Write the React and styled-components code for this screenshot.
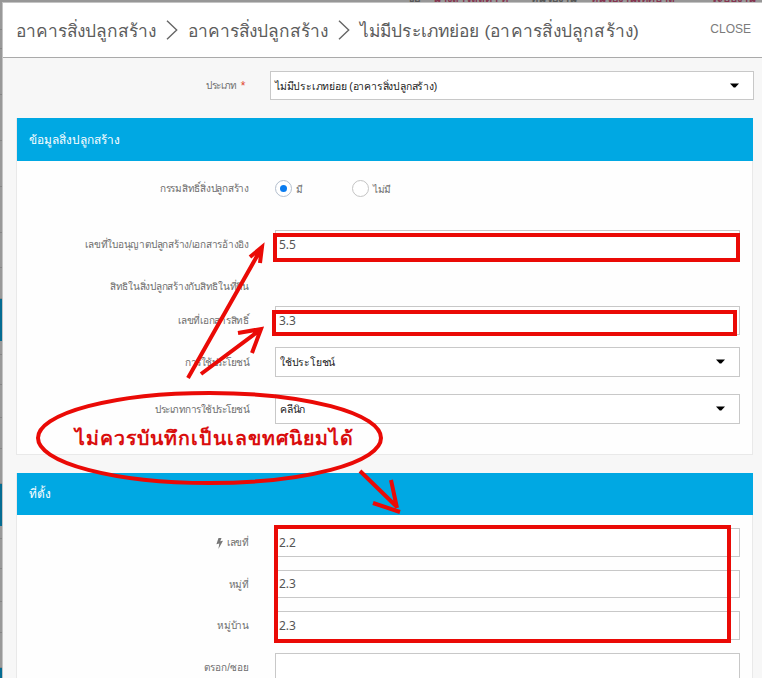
import React from 'react';
import styled, { createGlobalStyle } from 'styled-components';

const Global = createGlobalStyle`
  * { box-sizing: border-box; }
  body { margin: 0; overflow: hidden; font-family: "Liberation Sans", Arial, sans-serif; }
`;

const Page = styled.div`
  position: relative;
  display: grid;
  grid-template-columns: 2px 1fr;
  grid-template-rows: 2px 1fr;
  width: 762px;
  height: 678px;
  overflow: hidden;
  background: #999;
`;

const Backdrop = styled.div`
  grid-column: 1 / -1;
  display: flex;
  gap: 8px;
  height: 2px;
  padding-left: 407px;
  overflow: hidden;
  background: #979797;
`;

const BackdropText = styled.span`
  flex: none;
  width: ${(p) => p.$w}px;
  height: 2px;
  overflow: hidden;
  white-space: nowrap;
  font-size: 11px;
  font-weight: bold;
  line-height: 14px;
  color: ${(p) => (p.$accent ? '#85344f' : '#555')};
  & > span { display: block; margin-top: -9px; }
`;

const Rail = styled.div`
  display: flex;
  flex-direction: column;
  overflow: hidden;
`;

const RailCell = styled.div`
  flex: none;
  height: ${(p) => p.$h}px;
  background: ${(p) => (p.$active ? '#046c92' : '#999')};
  border-bottom: 1px solid ${(p) => (p.$active ? '#046c92' : '#858585')};
`;

const Modal = styled.section`
  display: flex;
  flex-direction: column;
  min-width: 0;
  background: #f7f7f7;
  border-top: 1px solid #c4c4c4;
  border-left: 1px solid #c4c4c4;
`;

const ModalHeader = styled.header`
  flex: none;
  display: flex;
  align-items: flex-start;
  height: 55px;
  padding: 14px 11px 0 13px;
  background: #fff;
  border-bottom: 1px solid #aaa;
`;

const Crumb = styled.h1`
  margin: 0;
  width: ${(p) => p.$w}px;
  font-size: 17.35px;
  font-weight: normal;
  letter-spacing: ${(p) => p.$ls}px;
  line-height: 29px;
  white-space: nowrap;
  color: #5c5c5c;
`;

const Chevron = styled.svg`
  flex: none;
  width: 12px;
  height: 20px;
  margin: 3px 10px 0;
`;

const Close = styled.button`
  margin: 4px 0 0 auto;
  padding: 0;
  border: 0;
  background: none;
  font: 12px/16px "Liberation Sans", Arial, sans-serif;
  color: #7b7b7b;
`;

const Content = styled.div`
  display: flex;
  flex-direction: column;
  padding: 13px 8px 0 13px;
`;

const Card = styled.section`
  margin: ${(p) => p.$mt}px 1px 0 0;
  height: ${(p) => p.$h}px;
  background: #fefefe;
  border: 1px solid #e9e9e9;
  border-top: 0;
`;

const CardHeader = styled.h2`
  margin: 0 -1px ${(p) => p.$gap}px 0;
  height: ${(p) => p.$h}px;
  padding-left: 12px;
  background: #00a8e3;
  color: #fff;
  font-size: 11.85px;
  font-weight: normal;
  line-height: ${(p) => p.$h + 1}px;
`;

const Row = styled.div`
  display: grid;
  grid-template-columns: ${(p) => (p.$top ? '229px 484px' : '232px 465px')};
  column-gap: ${(p) => (p.$top ? 25 : 26)}px;
  align-items: center;
  height: ${(p) => p.$h || 30}px;
  margin-top: ${(p) => p.$mt || 0}px;
`;

const Label = styled.label`
  display: flex;
  justify-content: flex-end;
  align-items: center;
  gap: 4px;
  padding-top: 1px;
  font-size: 10px;
  letter-spacing: ${(p) => p.$ls ?? -0.24}px;
  line-height: 16px;
  white-space: nowrap;
  color: #6e6e6e;
`;

const Required = styled.span`
  font-size: 12px;
  color: #e0452f;
`;

const Field = styled.div`
  display: flex;
  align-items: center;
  justify-content: space-between;
  height: 100%;
  padding: ${(p) => (p.$select ? '1px 14px 0 4px' : '0 4px 1px 3px')};
  background: #fff;
  border: 1px solid #c8c8c8;
  font-family: ${(p) => (p.$select ? '"Liberation Sans"' : '"Noto Sans"')}, sans-serif;
  font-size: ${(p) => (p.$select ? 10.4 : 12)}px;
  letter-spacing: ${(p) => (p.$select ? '-0.2px' : 'normal')};
  color: ${(p) => (p.$select ? '#222' : '#555')};
`;

const Caret = styled.svg`
  width: 9px;
  height: 5px;
  margin-bottom: 2px;
`;

const Radios = styled.div`
  display: flex;
  align-items: center;
`;

const RadioOption = styled.label`
  display: flex;
  align-items: center;
  gap: 4px;
  width: 77px;
  font-size: 10px;
  letter-spacing: -0.3px;
  color: #6e6e6e;
`;

const RadioText = styled.span`
  padding-top: 2px;
`;

const Dot = styled.span`
  display: grid;
  place-items: center;
  width: 17px;
  height: 17px;
  border: 1px solid ${(p) => (p.$on ? '#b4bfce' : '#c4c4c4')};
  border-radius: 50%;
  background: #fff;
  &::after {
    content: '';
    width: 7px;
    height: 7px;
    border-radius: 50%;
    background: ${(p) => (p.$on ? '#0a7cf0' : 'transparent')};
  }
`;

const Annotations = styled.svg`
  position: absolute;
  inset: 0;
  width: 762px;
  height: 678px;
  pointer-events: none;
`;

const Note = styled.text`
  font-family: "Liberation Sans", Arial, sans-serif;
  font-size: 19.5px;
  font-weight: bold;
  fill: #d90d0d;
`;

const Separator = () => (
  <Chevron viewBox="0 0 12 20" fill="none" stroke="#666" strokeWidth="1.4">
    <path d="M1 .7 10.7 10 1 19.3" />
  </Chevron>
);

const Select = ({ children }) => (
  <Field $select>
    <span>{children}</span>
    <Caret viewBox="0 0 9 5"><path d="M0 .5h9L5.3 4.5H3.7z" fill="#000" /></Caret>
  </Field>
);

const Input = ({ children }) => <Field>{children}</Field>;

const FULL = 'อาคารสิ่งปลูกสร้าง';
const rail = [[28], [19], [46], [46], [46], [46], [35], [31], [42, 1], [14], [30], [33], [31], [35], [42, 1], [13], [30], [33], [31], [35], [20, 1]];

export default function App() {
  return (
    <Page>
      <Global />
      <Backdrop>
        <BackdropText $w={18}><span>ชื่อ</span></BackdropText>
        <BackdropText $w={90} $accent><span>นางสาวลลิตา ที่</span></BackdropText>
        <BackdropText $w={52}><span>หน่วยงาน</span></BackdropText>
        <BackdropText $w={112} $accent><span>หน่วยงานเทศบาล</span></BackdropText>
        <BackdropText $w={48} $accent><span>ระบบงาน</span></BackdropText>
      </Backdrop>
      <Rail>
        {rail.map(([h, active], i) => <RailCell key={i} $h={h} $active={active} />)}
      </Rail>
      <Modal>
        <ModalHeader>
          <Crumb $w={140} $ls={-0.1}>{FULL}</Crumb>
          <Separator />
          <Crumb $w={140} $ls={-0.1}>{FULL}</Crumb>
          <Separator />
          <Crumb $w={278} $ls={0.12}>ไม่มีประเภทย่อย ({FULL})</Crumb>
          <Close>CLOSE</Close>
        </ModalHeader>
        <Content>
          <Row $top $h={29}>
            <Label $ls={-0.4}>ประเภท <Required>*</Required></Label>
            <Select>ไม่มีประเภทย่อย ({FULL})</Select>
          </Row>
          <Card $mt={18} $h={337}>
            <CardHeader $h={43} $gap={12}>ข้อมูลสิ่งปลูกสร้าง</CardHeader>
            <Row>
              <Label>กรรมสิทธิ์สิ่งปลูกสร้าง</Label>
              <Radios>
                <RadioOption><Dot $on /><RadioText>มี</RadioText></RadioOption>
                <RadioOption><Dot /><RadioText>ไม่มี</RadioText></RadioOption>
              </Radios>
            </Row>
            <Row $h={29} $mt={27}>
              <Label>เลขที่ใบอนุญาตปลูกสร้าง/เอกสารอ้างอิง</Label>
              <Input>5.5</Input>
            </Row>
            <Row $mt={12}><Label>สิทธิในสิ่งปลูกสร้างกับสิทธิในที่ดิน</Label></Row>
            <Row $h={29} $mt={5}><Label>เลขที่เอกสารสิทธิ์</Label><Input>3.3</Input></Row>
            <Row $mt={12}><Label $ls={-0.5}>การใช้ประโยชน์</Label><Select>ใช้ประโยชน์</Select></Row>
            <Row $mt={17}><Label $ls={-0.5}>ประเภทการใช้ประโยชน์</Label><Select>คลีนิก</Select></Row>
          </Card>
          <Card $mt={18} $h={230}>
            <CardHeader $h={42} $gap={13}>ที่ตั้ง</CardHeader>
            <Row $h={29}>
              <Label>
                <svg width="7" height="11" viewBox="0 0 7 11"><path d="M2.5 0h3L4.2 3.2 7 2.7 2.4 11 3.3 5.6.4 6.2z" fill="#777" /></svg>
                เลขที่
              </Label>
              <Input>2.2</Input>
            </Row>
            <Row $h={28} $mt={13}><Label>หมู่ที่</Label><Input>2.3</Input></Row>
            <Row $h={29} $mt={13}><Label>หมู่บ้าน</Label><Input>2.3</Input></Row>
            <Row $h={29} $mt={13}><Label $ls={0}>ตรอก/ซอย</Label><Input /></Row>
          </Card>
        </Content>
      </Modal>
      <Annotations viewBox="0 0 762 678" fill="none" stroke="#ea0a06" strokeWidth="4">
        <rect x="275" y="235" width="463" height="25" />
        <rect x="274" y="312" width="461" height="22" />
        <rect x="276" y="527" width="453" height="114" />
        <ellipse cx="209.5" cy="438" rx="171.5" ry="45" />
        <path d="M188 378 261 249M250 257 262 247 260 263" />
        <path d="M201 374 260 330M238 333 261 329 252 353" />
        <path d="M360 471 397 507M391 480 397 508M373 503 400 512" />
        <Note x="75" y="445" stroke="none" textLength="278" lengthAdjust="spacing">ไม่ควรบันทึกเป็นเลขทศนิยมได้</Note>
      </Annotations>
    </Page>
  );
}
